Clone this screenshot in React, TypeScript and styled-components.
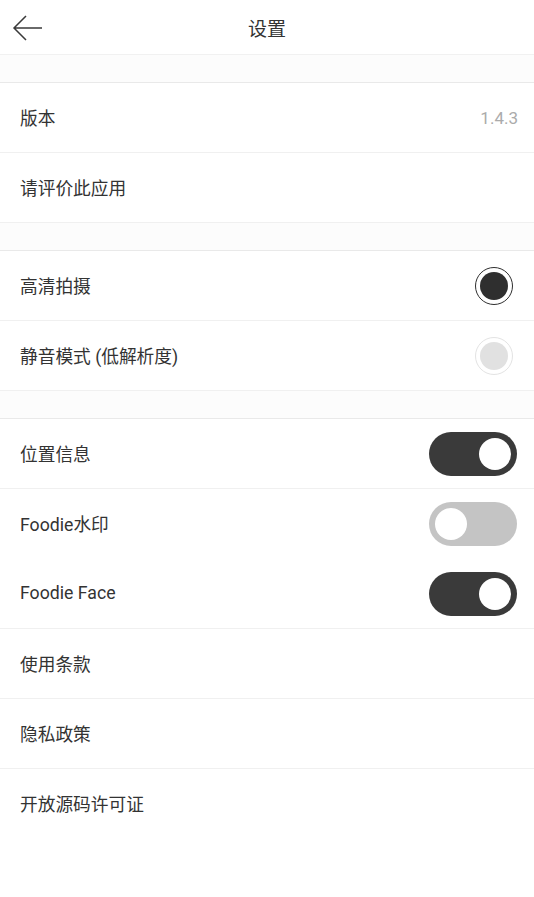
import React from "react";
import styled, { createGlobalStyle } from "styled-components";

const Global = createGlobalStyle`
  html, body { margin: 0; padding: 0; background: #fff; }
  body { font-family: Roboto, "Noto Sans CJK SC", "Noto Sans", sans-serif; -webkit-font-smoothing: antialiased; }
`;

const Page = styled.div`
  width: 534px;
  min-height: 897px;
  background: #fff;
  display: flex;
  flex-direction: column;
`;

const Header = styled.header`
  height: 54px;
  border-bottom: 1px solid #f1f1f1;
  display: flex;
  align-items: center;
  justify-content: center;
  position: relative;
`;

const Back = styled.button`
  position: absolute;
  left: 10px;
  top: 12px;
  width: 34px;
  height: 32px;
  padding: 0;
  border: 0;
  background: none;
  display: flex;
  align-items: center;
  justify-content: center;
`;

const Title = styled.h1`
  margin: 0;
  font-size: 19px;
  font-weight: 400;
  color: #333;
`;

const Gap = styled.div`
  height: 27px;
  background: #fcfcfc;
  border-bottom: 1px solid #e9e9e9;
`;

const Row = styled.div<{ $noBorder?: boolean }>`
  height: 69px;
  display: flex;
  align-items: center;
  justify-content: space-between;
  padding: 0 18px 0 20px;
  border-bottom: ${(p) => (p.$noBorder ? "1px solid transparent" : "1px solid #f0f0f0")};
`;

const Label = styled.span`
  font-size: 17.7px;
  color: #333;
  margin-top: -1px;
`;

const Value = styled.span`
  font-size: 17px;
  color: #ababab;
  margin-right: -2px;
`;

const Radio = styled.span<{ $on: boolean }>`
  width: 36px;
  height: 36px;
  border-radius: 50%;
  border: 1.5px solid ${(p) => (p.$on ? "#2f2f2f" : "#e3e3e3")};
  display: flex;
  align-items: center;
  justify-content: center;
  margin-right: 3px;
  &::after {
    content: "";
    width: 28px;
    height: 28px;
    border-radius: 50%;
    background: ${(p) => (p.$on ? "#2f2f2f" : "#e1e1e1")};
  }
`;

const Toggle = styled.span<{ $on: boolean }>`
  width: 88px;
  height: 44px;
  border-radius: 22px;
  background: ${(p) => (p.$on ? "#3a3a3a" : "#c4c4c4")};
  display: flex;
  align-items: center;
  justify-content: ${(p) => (p.$on ? "flex-end" : "flex-start")};
  padding: 0 6px;
  box-sizing: border-box;
  margin-right: -1px;
  &::after {
    content: "";
    width: 32px;
    height: 32px;
    border-radius: 50%;
    background: #fff;
  }
`;

export default function App() {
  return (
    <Page>
      <Global />
      <Header>
        <Back aria-label="back">
          <svg width="32" height="30" viewBox="0 0 32 30">
            <path d="M31 15H3M15 3L3 15l12 12" fill="none" stroke="#3a3a3a" strokeWidth="1.5" />
          </svg>
        </Back>
        <Title>设置</Title>
      </Header>
      <Gap />
      <Row>
        <Label>版本</Label>
        <Value>1.4.3</Value>
      </Row>
      <Row>
        <Label>请评价此应用</Label>
      </Row>
      <Gap />
      <Row>
        <Label>高清拍摄</Label>
        <Radio $on />
      </Row>
      <Row>
        <Label>静音模式 (低解析度)</Label>
        <Radio $on={false} />
      </Row>
      <Gap />
      <Row>
        <Label>位置信息</Label>
        <Toggle $on />
      </Row>
      <Row $noBorder>
        <Label>Foodie水印</Label>
        <Toggle $on={false} />
      </Row>
      <Row>
        <Label>Foodie Face</Label>
        <Toggle $on />
      </Row>
      <Row>
        <Label>使用条款</Label>
      </Row>
      <Row>
        <Label>隐私政策</Label>
      </Row>
      <Row $noBorder>
        <Label>开放源码许可证</Label>
      </Row>
    </Page>
  );
}
